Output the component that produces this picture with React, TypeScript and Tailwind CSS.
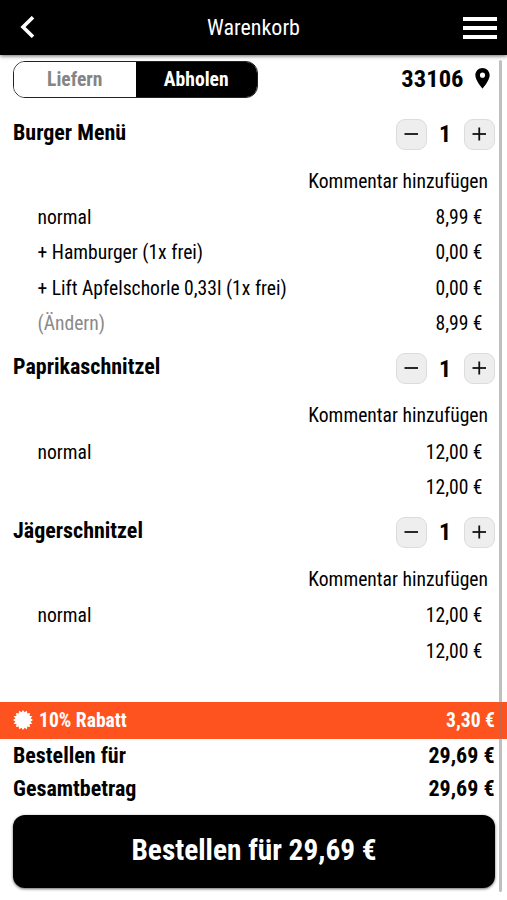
import React from 'react';

interface CartRow {
  label?: string;
  price: string;
  muted?: boolean;
}

interface CartItemProps {
  name: string;
  count: number;
  rows: CartRow[];
}

const items: CartItemProps[] = [
  {
    name: 'Burger Menü',
    count: 1,
    rows: [
      { label: 'normal', price: '8,99 €' },
      { label: '+ Hamburger (1x frei)', price: '0,00 €' },
      { label: '+ Lift Apfelschorle 0,33l (1x frei)', price: '0,00 €' },
      { label: '(Ändern)', price: '8,99 €', muted: true },
    ],
  },
  {
    name: 'Paprikaschnitzel',
    count: 1,
    rows: [{ label: 'normal', price: '12,00 €' }, { price: '12,00 €' }],
  },
  {
    name: 'Jägerschnitzel',
    count: 1,
    rows: [{ label: 'normal', price: '12,00 €' }, { price: '12,00 €' }],
  },
];

// 16 pointed star, alternating outer and inner radius
const badgePoints = Array.from({ length: 32 }, (_, i) => {
  const r = i % 2 === 0 ? 10 : 7.8;
  const a = (i * Math.PI) / 16;
  return `${(10 + r * Math.sin(a)).toFixed(2)},${(10 - r * Math.cos(a)).toFixed(2)}`;
}).join(' ');

function StepButton({ plus }: { plus?: boolean }) {
  return (
    <button className="w-[31px] h-[31px] rounded-[9px] bg-[#eeeeee] border border-[#dcdcdc] flex items-center justify-center">
      <svg width="15" height="15" viewBox="0 0 15 15" stroke="#111" strokeWidth="1.8">
        <path d="M0.5 7h13.5" />
        {plus && <path d="M7.25 0.5v13" />}
      </svg>
    </button>
  );
}

function CartItem({ name, count, rows }: CartItemProps) {
  return (
    <section className="pt-3">
      <div className="flex items-center justify-between pl-[13px] pr-[12.5px] h-[31px]">
        <h2 className="text-[22px] leading-7 font-bold pb-[3px]">{name}</h2>
        <div className="flex items-center">
          <StepButton />
          <span className="w-[37px] text-center text-[24px] leading-7 font-bold">{count}</span>
          <StepButton plus />
        </div>
      </div>
      <div className="h-[50px] pt-[18px] pr-[19px] text-right text-[19.6px] leading-7">Kommentar hinzufügen</div>
      {rows.map((row, i) => (
        <div key={i} className="h-[35.4px] flex items-center justify-between pl-[37.5px] pr-[24.5px] pt-px text-[19.6px]">
          <span className={row.muted ? 'text-[#8a8a8a]' : ''}>{row.label}</span>
          <span>{row.price}</span>
        </div>
      ))}
    </section>
  );
}

export default function App() {
  return (
    <div className="relative w-full h-[900px] bg-white text-black flex flex-col overflow-hidden font-['Roboto','Liberation_Sans',sans-serif] font-[440] [font-stretch:75%]">
      {/* Header */}
      <header className="h-[54.5px] shrink-0 bg-black text-white grid grid-cols-[1fr_auto_1fr] items-center px-[10px] shadow-[0_1px_4px_rgba(0,0,0,0.6)]">
        <svg className="ml-[10px]" width="15" height="22" viewBox="0 0 15 22" fill="none" stroke="currentColor" strokeWidth="3.6">
          <path d="M13 1.2L3 11l10 9.8" />
        </svg>
        <h1 className="text-[22px]">Warenkorb</h1>
        <div className="justify-self-end flex flex-col gap-[5.5px] w-[34px] pt-px">
          <span className="h-[3.5px] bg-white" />
          <span className="h-[3.5px] bg-white" />
          <span className="h-[3.5px] bg-white" />
        </div>
      </header>

      {/* Delivery mode */}
      <div className="flex justify-between pt-[6px] pl-[13px] pr-[17px] h-[52px] shrink-0">
        <div className="flex w-[245px] h-[37px] rounded-[12px] border-[1.5px] border-[#222] overflow-hidden text-[19.6px] font-bold">
          <button className="flex-1 pt-[2px] bg-white text-[#858585]">Liefern</button>
          <button className="flex-1 pt-[2px] bg-black text-white">Abholen</button>
        </div>
        <div className="flex items-center gap-[11.5px] h-9 text-[24.6px] font-bold">
          <span className="pt-px">33106</span>
          <svg width="15" height="20.5" viewBox="5 2 14 20" fill="currentColor">
            <path d="M12 2C8.13 2 5 5.13 5 9c0 5.25 7 13 7 13s7-7.75 7-13c0-3.87-3.13-7-7-7zm0 9.5a2.5 2.5 0 0 1 0-5 2.5 2.5 0 0 1 0 5z" />
          </svg>
        </div>
      </div>

      <main className="flex-1 min-h-0">
        {items.map((item) => (
          <CartItem key={item.name} {...item} />
        ))}
      </main>

      {/* Totals */}
      <footer className="shrink-0 h-[198px] font-bold">
        <div className="h-[36.5px] bg-[#ff531f] text-white flex items-center pl-[13px] pr-3 text-[19.6px]">
          <svg width="20" height="20" viewBox="0 0 20 20" fill="currentColor">
            <polygon points={badgePoints} />
          </svg>
          <span className="pl-[6px] pt-px">10% Rabatt</span>
          <span className="ml-auto pt-px">3,30 €</span>
        </div>
        <div className="flex items-center justify-between h-[33px] pl-[13px] pr-[12.5px] pt-px text-[22px]">
          <span>Bestellen für</span>
          <span>29,69 €</span>
        </div>
        <div className="flex items-center justify-between h-[33px] pl-[13px] pr-[12.5px] pt-px text-[22px]">
          <span>Gesamtbetrag</span>
          <span>29,69 €</span>
        </div>
        <button className="block ml-[13px] mt-[10px] w-[482px] h-[73px] rounded-[12px] bg-black text-white text-[29.3px] font-bold shadow-[0_1px_3px_rgba(0,0,0,0.6)]">
          Bestellen für 29,69 €
        </button>
      </footer>

      {/* Scrollbar thumb over the content */}
      <div className="absolute top-[60px] right-[5px] w-[3.5px] h-[832px] rounded-sm bg-[#808080]/50" />
    </div>
  );
}
